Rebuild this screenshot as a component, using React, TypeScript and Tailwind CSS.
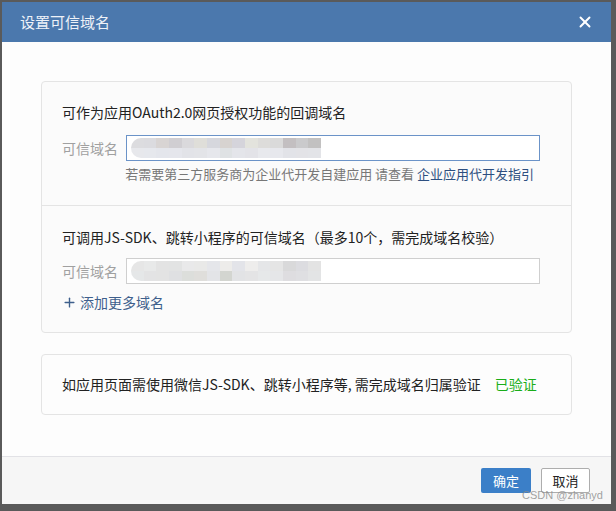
import React from 'react';
import { X, Plus } from 'lucide-react';

const font = { fontFamily: '"Microsoft YaHei", "Noto Sans CJK SC", "Liberation Sans", sans-serif' };

const row1 = ['#d9d9dc', '#d8d8dc', '#d4d0cf', '#cbc9ce', '#d6d5d9', '#dcdbd5', '#d2d3da', '#d3cfcc', '#d1d0d8', '#e0e0da', '#dad9d6', '#d7d7d6', '#bdb9bb', '#c5c5c7', '#bcbbbb'];
const row2 = ['#e5e6eb', '#e4e6ec', '#e2e4ea', '#e3e4ea', '#dfe1e6', '#e0e2e6', '#e4e5eb', '#dcdfe2', '#e2e3e8', '#e0e1e6', '#e6e7ec', '#e5e6ec', '#dfe0e6', '#e0e0e5', '#e1e2e6'];
const row3 = ['#e4e4e4', '#e6e7e7', '#e1e1e0', '#dfe0e1', '#e7e7e8', '#e7e7e6', '#e3e4e8', '#ecebe8', '#e1e2e7', '#edecea', '#e3e4e6', '#e3e3e3', '#d5d5d6', '#d9d9dd', '#e0e0e0'];
const row4 = ['#e3e5e6', '#e1e1e2', '#e0e0e1', '#dcdddf', '#d9dbd8', '#dcdbd8', '#e0e2e5', '#cfd1cc', '#dfe0e3', '#e2e2e3', '#e4e6e7', '#e3e4e6', '#dbdadd', '#dcdcdf', '#e1e2e3'];

const Mosaic: React.FC<{ top: string[]; bottom: string[] }> = ({ top, bottom }) => (
  <div className="flex flex-col rounded-l-[10px] overflow-hidden ml-[4px] w-[190px] h-[20px] opacity-90">
    <div className="flex h-[10px]">
      {top.map((c, i) => <div key={i} className="flex-1" style={{ backgroundColor: c }} />)}
    </div>
    <div className="flex h-[10px]">
      {bottom.map((c, i) => <div key={i} className="flex-1" style={{ backgroundColor: c }} />)}
    </div>
  </div>
);

const DomainInput: React.FC<{ focused?: boolean; top: string[]; bottom: string[] }> = ({ focused, top, bottom }) => (
  <div className="flex items-center">
    <span className="w-[64px] text-[14px] text-[#a0a0a0]">可信域名</span>
    <div className={`flex items-center w-[414px] h-[26px] bg-white border ${focused ? 'border-[#6b93c8]' : 'border-[#cfcfcf]'}`}>
      <Mosaic top={top} bottom={bottom} />
    </div>
  </div>
);

export default function App() {
  return (
    <div className="w-[616px] h-[511px] bg-[#5a5a5a] pt-[2px] pl-[2px] overflow-hidden" style={font}>
      <div className="relative w-[609px] h-[502px] bg-[#fdfdfd] flex flex-col">
        <div className="h-[40px] bg-[#4b78ad] flex items-center justify-between pl-[18px] pr-[17px]">
          <span className="text-[15px] text-[#eef2f8]">设置可信域名</span>
          <X size={18} strokeWidth={2.6} className="text-white" />
        </div>

        <div className="flex-1 px-[39px] pt-[39px]">
          <div className="border border-[#e4e4e4] rounded-[4px] bg-[#fbfbfb]">
            <div className="px-[20px] pt-[20px] pb-[21px] border-b border-[#e4e4e4]">
              <p className="text-[14px] leading-[20px] text-[#222]">可作为应用OAuth2.0网页授权功能的回调域名</p>
              <div className="mt-[13px]">
                <DomainInput focused top={row1} bottom={row2} />
              </div>
              <p className="mt-[3px] pr-[17px] text-right text-[13px] leading-[20px] text-[#777]">
                若需要第三方服务商为企业代开发自建应用 请查看 <span className="text-[#2d4f80]">企业应用代开发指引</span>
              </p>
            </div>
            <div className="px-[20px] pt-[21px] pb-[20px]">
              <p className="text-[14px] leading-[20px] text-[#222]">可调用JS-SDK、跳转小程序的可信域名（最多10个，需完成域名校验）</p>
              <div className="mt-[11px]">
                <DomainInput top={row3} bottom={row4} />
              </div>
              <div className="mt-[8px] flex items-center gap-[3px] text-[14px] leading-[20px] text-[#3e5f8c]">
                <Plus size={15} strokeWidth={2.2} />
                <span>添加更多域名</span>
              </div>
            </div>
          </div>

          <div className="mt-[21px] h-[61px] border border-[#e4e4e4] rounded-[4px] bg-[#fdfdfd] flex items-center px-[20px]">
            <span className="text-[14px] text-[#222]">如应用页面需使用微信JS-SDK、跳转小程序等, 需完成域名归属验证</span>
            <span className="ml-[14px] text-[14px] text-[#1aad19]">已验证</span>
          </div>
        </div>

        <div className="h-[48px] border-t border-[#e2e2e6] bg-[#f6f6f6] flex items-center justify-end gap-[10px] pr-[21px]">
          <button className="w-[50px] h-[25px] rounded-[2px] bg-[#3b7fc8] text-white text-[13px]">确定</button>
          <button className="w-[49px] h-[25px] rounded-[2px] bg-white border border-[#adadad] text-[#222] text-[13px]">取消</button>
        </div>

        <span className="absolute left-[520px] top-[485px] text-[11px] text-[#8a8a8a]/80" style={{ fontFamily: '"Liberation Sans", sans-serif' }}>
          CSDN @zhanyd
        </span>
      </div>
    </div>
  );
}
